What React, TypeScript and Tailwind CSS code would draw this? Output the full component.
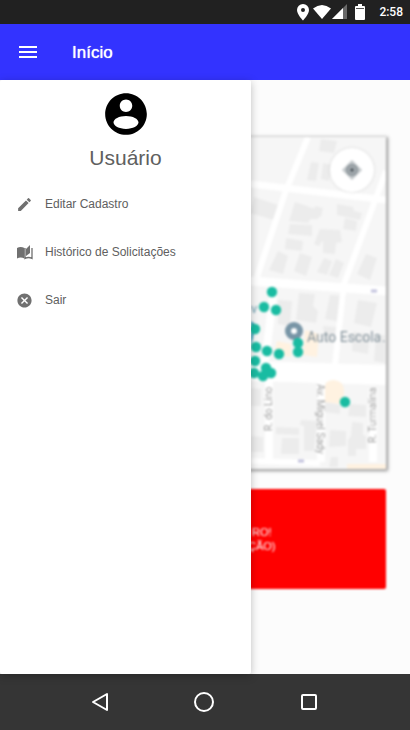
import React from "react";
import { MdCancel, MdEdit } from "react-icons/md";

const pins: [number, number][] = [
  [272, 292], [264, 307], [276, 310], [255, 329], [256, 347], [267, 351],
  [279, 354], [298, 343], [298, 352], [255, 361], [266, 368], [254, 373],
  [263, 376], [271, 373], [345, 402],
];

const buildings = [
  "M254 197l24 8-4 15-24-7z", "M295 202l26 9-3 8h-8l-2 4-19-2z", "M290 224l22 1v11l-24-2z",
  "M286 238l17 3-1 10-17-2z", "M315 206l8 2-2 9-8-2z", "M337 204l16 3 1 4 8 2-2 7-23-5z",
  "M345 218l12 3-1 10-13-2z", "M320 229l20 1 2 12-6 1-1 11-12-1v-13l-4 6-5-2z",
  "M278 251l10 5-5 18-14-4z", "M300 253l12 4-6 19-12-5z", "M324 258l8 3-5 14-10-3z",
  "M336 259l8 4-6 15-9-3z", "M366 254l11 4-7 22-13-6z",
  "M321 139l16 2-3 12-15-2z", "M311 162l8 1-3 18-9-1z", "M323 163l9 2-3 16-8-2z",
  "M299 293l16 1-2 12 5 5-2 12-20-3z", "M330 295l16 1-4 26-17-3z",
  "M358 300l19 3-6 24-17-4z", "M278 300l14 1-2 25-12-2z", "M353 332l17 2-2 20-16-3z",
  "M323 326l13 1-1 16-10-1z", "M376 335h9v28l-11-2z",
  "M276 427l23 1v7l-23-1z", "M282 438h17v16h-18z", "M301 420l16 1-3 30h-10v-25l-4-1z",
  "M325 402l15 3v9l-16-2z", "M350 404l16 1v12l-18-1z", "M330 430l16 1v15l-17 1z",
  "M352 422l11 1v12l3 1v13h-10v7h-8v-16l3-4z", "M331 457h7v10h-9z",
  "M251 388l10 1v17h-10z", "M251 436l12 1v15h-12z",
];

function StreetMap() {
  return (
    <svg className="block h-full w-full" viewBox="24 137 362 332" preserveAspectRatio="xMaxYMin slice" role="img" aria-label="Mapa">
      <rect x="24" y="137" width="362" height="332" fill="#f6f6f6" />
      <g fill="#ececec">
        {buildings.map((d) => <path key={d} d={d} />)}
      </g>
      <g fill="none" stroke="#fff">
        <path d="M308 137L285 193L256 280" strokeWidth="6" />
        <path d="M386 171L376 198L344 284L335 365" strokeWidth="6" />
        <path d="M24 155L251 184L386 200" strokeWidth="7" />
        <path d="M24 269L251 281L386 291" strokeWidth="9" />
        <path d="M274 289L265 362" strokeWidth="8" />
        <path d="M24 352L251 371L386 375" strokeWidth="20" />
        <path d="M269 380V462M321 380V462M373 388V462" strokeWidth="8" />
        <path d="M251 461L320 463" strokeWidth="6" />
      </g>
      <g fill="#fff2e1">
        <path d="M277 341l14 3v13l-17-3zM305 330l14 4-2 23-14-2zM325 387q0-7 9-7 9 1 10 9v5l-4 10-15-2zM347 464h39v5h-39z" />
      </g>
      <path d="M371 291h6M298 461h6" stroke="#c3c3de" strokeWidth="3" />
      <path d="M251 321l4 3-2 14-2 8z" fill="#329eb8" />
      <text x="251" y="313" fontSize="13" fill="#6d9fb0" fontFamily="Roboto, sans-serif">v</text>
      <circle cx="294" cy="331" r="6" fill="#fff" stroke="#7895a6" strokeWidth="6" />
      <g fill="#19bca2">
        {pins.map(([x, y]) => <circle key={`${x}-${y}`} cx={x} cy={y} r="5.200" />)}
      </g>
      <g fontFamily="Roboto, sans-serif">
        <g fontSize="14" fill="#84939c">
          <text x="307" y="342">Auto Escola</text>
          <text x="382" y="342">.</text>
        </g>
        <g fontSize="10" fill="#a0a0a0">
          <text transform="translate(272 431) rotate(-90)">R. do Lino</text>
          <text transform="translate(317 384) rotate(90)">Av. Miguel Sady</text>
          <text transform="translate(376 443) rotate(-90)">R. Turmalina</text>
        </g>
      </g>
    </svg>
  );
}

function StatusBar() {
  return (
    <div className="flex h-6 shrink-0 items-center justify-end bg-[#212121] pr-[7px] text-white">
      <svg width="74" height="24" viewBox="296 0 74 24" fill="#fff" aria-hidden="true">
        <path fillRule="evenodd" d="M303 4a6 6 0 0 0-6 6c0 4.500 6 10.500 6 10.500S309 14.500 309 10a6 6 0 0 0-6-6zm0 4a2 2 0 1 1 0 4a2 2 0 0 1 0-4z" />
        <path d="M313 8.500Q322 1.500 331 8.500L322 19z" />
        <path d="M347 4v15h-15z" fill="#696969" />
        <path d="M343 8v11h-11z" />
        <path d="M358 4h4v2h2q1 0 1 1v12q0 1-1 1h-8q-1 0-1-1V7q0-1 1-1h2z" />
        <path d="M356 8.500h8" stroke="#555" />
      </svg>
      <time className="ml-[9px] font-['Roboto',sans-serif] text-[12px] leading-4 font-medium">2:58</time>
    </div>
  );
}

function OpenBookIcon() {
  return (
    <svg width="17" height="17" viewBox="0 0 17 17" fill="#707070" aria-hidden="true">
      <path d="M1 4Q4.500 2 8.500 4V14.500Q4.500 12.500 1 14.500z" />
      <path d="M10 5l4-4v8l-4 3z" />
      <path d="M9 4v10.500Q12.500 12.500 16 14.500V4" fill="none" stroke="#707070" strokeWidth="1.300" />
    </svg>
  );
}

const menu = [
  { label: "Editar Cadastro", icon: <MdEdit size={17} color="#707070" aria-hidden="true" /> },
  { label: "Histórico de Solicitações", icon: <OpenBookIcon /> },
  { label: "Sair", icon: <MdCancel size={17} color="#707070" aria-hidden="true" /> },
];

function Drawer() {
  return (
    <aside className="absolute inset-y-0 left-0 w-[251px] rounded-[2px] bg-white shadow-[0_2px_8px_rgba(0,0,0,0.25)]">
      <header className="flex flex-col items-center pt-[9px]">
        <svg width="50" height="50" viewBox="0 0 24 24" aria-hidden="true">
          <path d="M12 2C6.480 2 2 6.480 2 12s4.480 10 10 10 10-4.480 10-10S17.520 2 12 2zm0 3c1.660 0 3 1.340 3 3s-1.340 3-3 3-3-1.340-3-3 1.340-3 3-3zM12 19.200c-3.300 0-6-1.500-6-3.200s2.700-3.100 6-3.100 6 1.400 6 3.100-2.700 3.200-6 3.200z" />
        </svg>
        <h2 className="mt-[7px] text-[21px] leading-6 text-[#606060]">Usuário</h2>
      </header>
      <nav className="mt-[10px]">
        <ul>
          {menu.map(({ label, icon }) => (
            <li key={label}>
              <button type="button" className="flex h-12 w-full items-center gap-3 px-4 text-left text-[12px] leading-4 text-[#606060]">
                {icon}
                {label}
              </button>
            </li>
          ))}
        </ul>
      </nav>
    </aside>
  );
}

export default function App() {
  return (
    <div className="flex min-h-screen flex-col bg-[#fcfcfc] font-['Liberation_Sans',Arial,sans-serif]">
      <StatusBar />
      <header className="flex h-14 shrink-0 items-center gap-8 bg-[#3333ff] px-4 text-white">
        <button type="button" aria-label="Menu">
          <svg width="24" height="24" viewBox="0 0 24 24" aria-hidden="true"><path d="M3 6h18v2H3zM3 11h18v2H3zM3 16h18v2H3z" fill="#fff" /></svg>
        </button>
        <h1 className="pt-[2px] text-[17px] leading-6 font-medium text-shadow-[0_0_1px_#fff]">Início</h1>
      </header>
      <div className="relative z-10 flex-1">
        <main className="px-6 pt-[57px] pb-6 blur-[1px]">
          <section className="relative h-[332px] shadow-[1px_1px_3px_1px_rgba(0,0,0,0.4)]">
            <StreetMap />
            <button type="button" aria-label="Minha localização" className="absolute top-[11px] right-3 flex size-11 items-center justify-center rounded-full bg-white shadow-[0_0_3px_rgba(0,0,0,0.15)]">
              <svg width="20" height="20" viewBox="0 0 20 20" aria-hidden="true">
                <path d="M10 0l3 3 4 4 3 3-3 3-4 4-3 3-3-3-4-4-3-3 3-3 4-4z" fill="#c2c7ca" />
                <circle cx="10" cy="10" r="5" fill="#a9b0b4" stroke="#8d969b" strokeWidth="2" />
                <circle cx="10" cy="10" r="2" fill="#596268" />
              </svg>
            </button>
          </section>
          <button type="button" className="mt-5 flex h-[100px] w-full items-center rounded-[2px] bg-[#ff0000] pl-[224px] text-[11px] leading-[14px] text-white">
            <span className="flex flex-col items-center">
              <span>RO!</span>
              <span>ÇÃO)</span>
            </span>
          </button>
        </main>
        <Drawer />
      </div>
      <footer className="flex h-14 shrink-0 items-center justify-center gap-[81px] bg-[#353535] pr-[2px]">
        <button type="button" aria-label="Voltar">
          <svg width="24" height="24" viewBox="0 0 24 24" fill="none" stroke="#fff" strokeWidth="2" strokeLinejoin="round"><path d="M20 4v16L6 12z" /></svg>
        </button>
        <button type="button" aria-label="Início">
          <svg width="24" height="24" viewBox="0 0 24 24" fill="none" stroke="#fff" strokeWidth="2"><circle cx="12" cy="12" r="9" /></svg>
        </button>
        <button type="button" aria-label="Aplicativos recentes">
          <svg width="24" height="24" viewBox="0 0 24 24" fill="none" stroke="#fff" strokeWidth="2"><rect x="5" y="5" width="14" height="14" rx="1" /></svg>
        </button>
      </footer>
    </div>
  );
}
